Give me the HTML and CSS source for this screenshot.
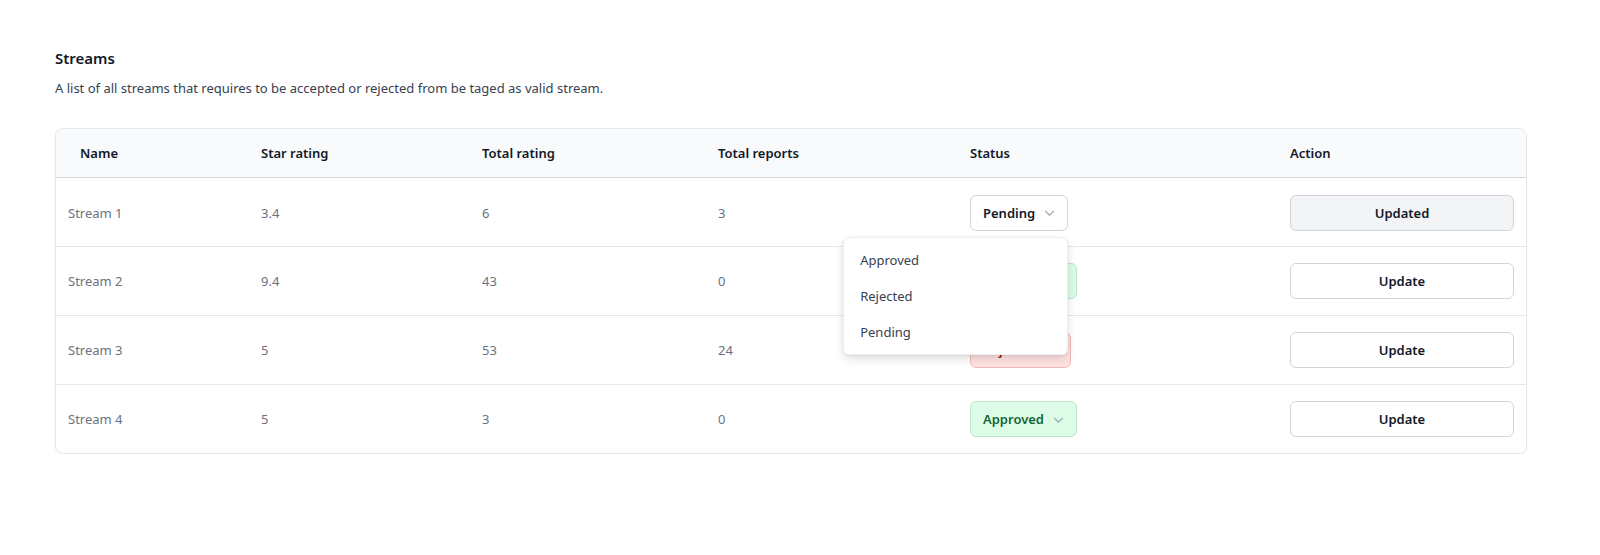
FILE: index.html
```html
<!DOCTYPE html>
<html lang="en">
<head>
<meta charset="utf-8">
<title>Streams</title>
<link rel="stylesheet" href="styles.css">
</head>
<body>
<main class="page">
  <h1 class="title">Streams</h1>
  <p class="desc">A list of all streams that requires to be accepted or rejected from be taged as valid stream.</p>
  <div class="card">
    <table class="table">
      <colgroup>
        <col class="c1"><col class="c2"><col class="c3"><col class="c4"><col class="c5"><col class="c6">
      </colgroup>
      <thead>
        <tr>
          <th class="first">Name</th>
          <th>Star rating</th>
          <th>Total rating</th>
          <th>Total reports</th>
          <th>Status</th>
          <th>Action</th>
        </tr>
      </thead>
      <tbody>
        <tr>
          <td>Stream 1</td><td>3.4</td><td>6</td><td>3</td>
          <td>
            <div class="sel-wrap">
              <button class="select pending">Pending <svg class="chev" viewBox="0 0 12 12"><path d="M2 4.5l4 4 4-4" fill="none" stroke="currentColor" stroke-width="1.1"/></svg></button>
              <ul class="menu">
                <li>Approved</li>
                <li>Rejected</li>
                <li>Pending</li>
              </ul>
            </div>
          </td>
          <td><button class="btn done">Updated</button></td>
        </tr>
        <tr>
          <td>Stream 2</td><td>9.4</td><td>43</td><td>0</td>
          <td><button class="select approved">Approved <svg class="chev" viewBox="0 0 12 12"><path d="M2 4.5l4 4 4-4" fill="none" stroke="currentColor" stroke-width="1.1"/></svg></button></td>
          <td><button class="btn">Update</button></td>
        </tr>
        <tr>
          <td>Stream 3</td><td>5</td><td>53</td><td>24</td>
          <td><button class="select rejected">Rejected <svg class="chev" viewBox="0 0 12 12"><path d="M2 4.5l4 4 4-4" fill="none" stroke="currentColor" stroke-width="1.1"/></svg></button></td>
          <td><button class="btn">Update</button></td>
        </tr>
        <tr>
          <td>Stream 4</td><td>5</td><td>3</td><td>0</td>
          <td><button class="select approved">Approved <svg class="chev" viewBox="0 0 12 12"><path d="M2 4.5l4 4 4-4" fill="none" stroke="currentColor" stroke-width="1.1"/></svg></button></td>
          <td><button class="btn">Update</button></td>
        </tr>
      </tbody>
    </table>
  </div>
</main>
</body>
</html>
```
FILE: styles.css
```css
* { box-sizing: border-box; }
html, body { margin: 0; background: #fff; }
body {
  font-family: "Noto Sans", "Liberation Sans", sans-serif;
  font-size: 14px;
  color: #111827;
}
.page { padding: 46px 73px 0 55px; }
.title {
  margin: 0;
  font-size: 15px;
  line-height: 24px;
  font-weight: 600;
  color: #111827;
}
.desc {
  margin: 8px 0 0;
  font-size: 13px;
  line-height: 20px;
  color: #374151;
}
.card {
  margin-top: 30px;
  border: 1px solid #e5e7eb;
  border-radius: 8px;
  box-shadow: 0 1px 2px rgba(0,0,0,0.06);
  overflow: visible;
}
.table {
  width: 100%;
  border-collapse: separate;
  border-spacing: 0;
  table-layout: fixed;
}
.c1 { width: 193px; } .c2 { width: 221px; } .c3 { width: 236px; }
.c4 { width: 252px; } .c5 { width: 320px; } .c6 { width: 248px; }
thead th {
  background: #f9fafb;
  height: 49px;
  padding: 0 12px;
  text-align: left;
  font-size: 13px;
  font-weight: 600;
  color: #111827;
  border-bottom: 1px solid #d1d5db;
}
thead th:first-child { padding-left: 24px; border-top-left-radius: 8px; }
thead th:last-child { border-top-right-radius: 8px; }
tbody td {
  height: 69px;
  padding: 0 12px;
  font-size: 13px;
  color: #6b7280;
  border-bottom: 1px solid #e5e7eb;
  vertical-align: middle;
}
tbody tr:first-child td { padding-top: 1px; }
tbody tr:last-child td { border-bottom: none; height: 68px; }
.sel-wrap { position: relative; display: inline-block; }
.select {
  display: inline-flex;
  align-items: center;
  gap: 8px;
  height: 36px;
  padding: 0 11px 0 12px;
  border: 1px solid #d1d5db;
  border-radius: 6px;
  background: #fff;
  font-family: inherit;
  font-size: 13px;
  font-weight: 600;
  color: #111827;
}
.chev { width: 13px; height: 13px; color: #9ca3af; }
.select.approved { background: #dcfce7; border-color: #bbe5c8; color: #166534; }
.select.rejected { background: #fee2e2; border-color: #f0b8b8; color: #991b1b; }
.menu {
  position: absolute;
  right: 0;
  top: 42px;
  width: 225px;
  margin: 0;
  padding: 4px 0;
  list-style: none;
  background: #fff;
  border: 1px solid #f0f0f2;
  border-radius: 6px;
  box-shadow: 0 4px 10px rgba(0,0,0,0.12), 0 1px 3px rgba(0,0,0,0.06);
  z-index: 5;
}
.menu li {
  height: 36px;
  line-height: 36px;
  padding: 0 16px;
  font-size: 13px;
  color: #374151;
}
.btn {
  display: block;
  width: 100%;
  height: 36px;
  border: 1px solid #d1d5db;
  border-radius: 6px;
  background: #fff;
  font-family: inherit;
  font-size: 13px;
  font-weight: 600;
  color: #111827;
}
.btn.done { background: #f3f4f6; }
```
